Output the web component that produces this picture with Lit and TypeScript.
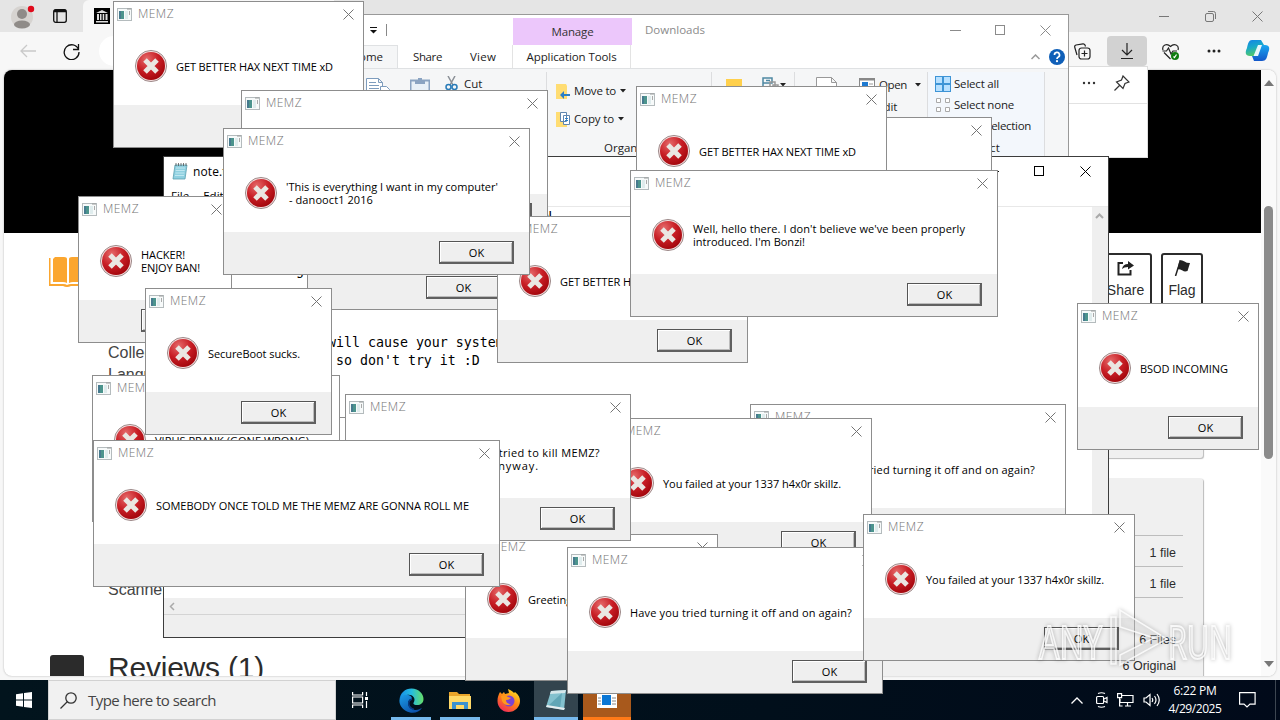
import { LitElement, html, css } from "lit";
import { customElement, property } from "lit/decorators.js";

// Text tracked so that it spans a given number of pixels.
@customElement("fit-text")
class FitText extends LitElement {
  static styles = css`:host { display: inline-block; white-space: pre; }`;
  @property({ type: Number }) w = 0;
  firstUpdated() {
    const n = (this.textContent || "").length;
    const natural = this.getBoundingClientRect().width;
    if (this.w && n) this.style.letterSpacing = `${(this.w - natural) / n}px`;
  }
  render() { return html`<slot></slot>`; }
}

const cross = (s = 11) => html`<svg width=${s} height=${s} viewBox="0 0 11 11" fill="none" stroke="currentColor"><path d="M.5 .5L10.5 10.5M10.5 .5L.5 10.5"/></svg>`;

type Line = [string, number];
interface Box { x: number; y: number; w: number; lines: Line[]; }

@customElement("memz-dialog")
class MemzDialog extends LitElement {
  static styles = css`
    :host { display: block; height: 147px; font: 11px/13px "Open Sans", "Noto Sans", sans-serif; color: #000; }
    .frame { box-sizing: border-box; height: 100%; border: 1px solid #8d8d8d; background: #fff; display: flex; flex-direction: column; overflow: hidden; }
    .bar { height: 24px; display: flex; align-items: center; padding: 0 9px 0 3px; color: #747474; flex: none; }
    .bar .name { margin-left: 6px; flex: 1; font-size: 12px; line-height: 16px; white-space: nowrap; font-weight: 300; }
    .bar svg, .body svg { flex: none; display: block; }
    .body { height: 79px; flex: none; display: flex; align-items: center; padding-left: 20px; }
    .text { margin: 1px 0 0 8px; display: flex; flex-direction: column; align-items: flex-start; }
    .foot { flex: 1; background: #efefef; display: flex; justify-content: flex-end; padding: 9px 15px 0 0; }
    .ok { box-sizing: border-box; width: 75px; height: 23px; border: 1px solid #555; border-right: 2px solid #606060; border-bottom: 2px solid #606060; box-shadow: inset 1px 1px #fff, inset -1px -1px #bbb; text-align: center; line-height: 21px; padding-left: 1px; }
  `;
  @property({ attribute: false }) box!: Box;
  render() {
    return html`<div class="frame">
      <div class="bar">
        <svg width="15" height="13" viewBox="0 0 15 13"><rect x=".5" y=".5" width="14" height="12" fill="#f7fafa" stroke="#b4bbbd"/><rect x="2" y="3" width="5" height="8" fill="#4c948d"/><rect x="2" y="3" width="2" height="8" fill="#467a8e"/><rect x="8" y="3" width="3" height="8" fill="#dfeced"/><rect x="12" y="3" width="1" height="4" fill="#aaa"/><path d="M10 1h4" stroke="#999"/></svg>
        <span class="name"><fit-text w="36">MEMZ</fit-text></span>${cross()}
      </div>
      <div class="body">
        <svg width="34" height="34" viewBox="0 0 34 34"><defs><radialGradient id="g" cx=".35" cy=".25" r=".85"><stop offset="0" stop-color="#e56a6a"/><stop offset=".5" stop-color="#c81e25"/><stop offset="1" stop-color="#9c0208"/></radialGradient></defs><circle cx="17" cy="17" r="15.6" fill="#f1dada" stroke="#8b7777" stroke-width=".8"/><circle cx="17" cy="17" r="14" fill="url(#g)"/><path d="M11 11L23 23M23 11L11 23" stroke="#eae7e2" stroke-width="5"/></svg>
        <div class="text">${this.box.lines.map(([t, w]) => html`<fit-text .w=${w}>${t}</fit-text>`)}</div>
      </div>
      <div class="foot"><div class="ok">OK</div></div>
    </div>`;
  }
}

const HAX: Line[] = [["GET BETTER HAX NEXT TIME xD", 157]];
const SKILLZ: Line[] = [["You failed at your 1337 h4x0r skillz.", 178]];
const AGAIN: Line[] = [["Have you tried turning it off and on again?", 222]];
const boxes: Box[] = [
  { x: 200, y: 417, w: 251, lines: HAX },
  { x: 113, y: 1, w: 251, lines: HAX },
  { x: 241, y: 90, w: 307, lines: [["'This is everything I want in my computer'", 212], [" - danooct1 2016", 87]] },
  { x: 307, y: 163, w: 210, lines: [["SecureBoot sucks.", 92]] },
  { x: 497, y: 216, w: 251, lines: HAX },
  { x: 741, y: 117, w: 251, lines: HAX },
  { x: 636, y: 86, w: 251, lines: HAX },
  { x: 630, y: 170, w: 368, lines: [["Well, hello there. I don't believe we've been properly", 272], ["introduced. I'm Bonzi!", 112]] },
  { x: 78, y: 196, w: 154, lines: [["HACKER!", 44], ["ENJOY BAN!", 59]] },
  { x: 223, y: 128, w: 307, lines: [["'This is everything I want in my computer'", 212], [" - danooct1 2016", 87]] },
  { x: 92, y: 375, w: 248, lines: [["VIRUS PRANK (GONE WRONG)", 154]] },
  { x: 145, y: 288, w: 187, lines: [["SecureBoot sucks.", 92]] },
  { x: 750, y: 404, w: 316, lines: AGAIN },
  { x: 600, y: 418, w: 272, lines: SKILLZ },
  { x: 465, y: 534, w: 253, lines: [["Greetings to all GAiA members!", 160]] },
  { x: 345, y: 394, w: 286, lines: [["I heard that you tried to kill MEMZ?", 192], ["It is still here anyway.", 131]] },
  { x: 93, y: 440, w: 407, lines: [["SOMEBODY ONCE TOLD ME THE MEMZ ARE GONNA ROLL ME", 313]] },
  { x: 1077, y: 303, w: 182, lines: [["BSOD INCOMING", 88]] },
  { x: 567, y: 547, w: 316, lines: AGAIN },
  { x: 863, y: 514, w: 272, lines: SKILLZ },
];

@customElement("edge-browser")
class EdgeBrowser extends LitElement {
  static styles = css`
    :host { display: flex; flex-direction: column; height: 680px; background: #f7f7f7; font-family: "Liberation Sans", Arial, sans-serif; color: #2c2c2c; }
    svg { display: block; flex: none; }
    .tabs { height: 32px; background: #e5e5e5; display: flex; align-items: center; flex: none; }
    .avatar { margin: 0 0 0 11px; }
    .ws { margin: 0 0 0 18px; }
    .tab { margin-left: 16px; width: 240px; height: 32px; background: #f7f7f7; border-radius: 6px 0 0 0; display: flex; align-items: center; padding-left: 11px; }
    .winctl { margin-left: auto; display: flex; gap: 36px; align-items: center; padding-right: 17px; color: #777; }
    .tools { height: 38px; display: flex; align-items: center; flex: none; box-sizing: border-box; }
    .back { margin-left: 20px; } .reload { margin-left: 26px; }
    .addr { margin-left: 19px; height: 30px; width: 900px; border-radius: 15px; background: #fff; }
    .right { flex: 1; display: flex; align-items: center; justify-content: flex-end; }
    .dl { width: 40px; height: 30px; background: #d2d2d2; border-radius: 4px; display: flex; align-items: center; justify-content: center; margin: 0 15px 0 16px; }
    .dots { margin: 0 24px 0 28px; } .cop { margin-right: 10px; }
    .view { margin: 0 4px 4px 4px; height: 606px; box-sizing: border-box; border-radius: 8px; background: #fff; overflow: hidden; display: flex; box-shadow: 0 0 2px #aaa; }
    .page { width: 1257px; overflow: hidden; }
    .hero { height: 163px; background: #000; }
    .below { display: flex; padding-left: 45px; }
    .icons { width: 59px; display: flex; flex-direction: column; padding-top: 24px; box-sizing: border-box; }
    .sq { margin: 368px 0 0 1px; width: 34px; height: 40px; border-radius: 3px; background: #2b2b2b; }
    .meta { width: 600px; padding-top: 109px; font-size: 16px; line-height: 22px; color: #444; }
    .scan { margin-top: 193px; }
    .rev { margin-top: 49px; font-size: 30px; line-height: 36px; color: #2c2c2c; }
    .side { margin-left: auto; width: 340px; margin-right: 58px; padding-top: 20px; }
    .acts { display: flex; justify-content: flex-end; gap: 9px; }
    .act { box-sizing: border-box; border: 2px solid #2c2c2c; border-radius: 3px; height: 60px; display: flex; flex-direction: column; align-items: center; padding-top: 5px; font-size: 14px; gap: 5px; line-height: 18px; }
    .share { width: 53px; } .flag { width: 42px; }
    .card { background: #f0f0f0; border-radius: 3px; box-shadow: 1px 1px 1px #bbb; }
    .card.a { margin-top: 76px; height: 69px; }
    .card.b { margin-top: 20px; height: 220px; font-size: 12.5px; text-align: right; padding: 27px 20px 0; }
    .row { height: 30px; line-height: 34px; border-bottom: 1px solid #bdbdbd; padding-right: 7px; }
    .sum { line-height: 26px; padding: 29px 7px 0 0; }
    .scroll { width: 15px; background: #fafafa; display: flex; flex-direction: column; align-items: center; }
    .thumb { width: 9px; height: 253px; margin: 120px 0 202px; border-radius: 5px; background: #8b8b8b; flex: none; }
    .up { margin-top: 10px; }
  `;
  render() {
    return html`
      <div class="tabs">
        <svg class="avatar" width="24" height="28" viewBox="0 0 24 28"><circle cx="11" cy="15" r="11" fill="#d6d3d0"/><circle cx="11" cy="12" r="5" fill="#8f8b88"/><ellipse cx="11" cy="22.5" rx="8" ry="4" fill="#8f8b88"/><circle cx="20" cy="7" r="3.2" fill="#e00b1c"/></svg>
        <svg class="ws" width="14" height="14" viewBox="0 0 14 14" fill="none" stroke="#111" stroke-width="1.3"><rect x=".7" y=".7" width="12.6" height="12.6" rx="2"/><path d="M1 2h12" stroke-width="2.500"/><path d="M4 3v10"/></svg>
        <div class="tab"><svg width="16" height="16" viewBox="0 0 16 16"><rect width="16" height="16"/><path d="M2 5L8 2l6 3zM2 13h12v1.5H2zM3 6h2v6H3zM6 6h1.5v6H6zM8.7 6h1.5v6H8.700zM11.500 6h2v6h-2z" fill="#ddd"/></svg></div>
        <div class="winctl">
          <svg width="10" height="10" stroke="currentColor"><path d="M0 5.500h10"/></svg>
          <svg width="11" height="11" viewBox="0 0 11 11" fill="none" stroke="currentColor"><rect x=".5" y="2.500" width="8" height="8" rx="1.500"/><path d="M3 .5h5.500a2 2 0 0 1 2 2V8"/></svg>
          ${cross()}
        </div>
      </div>
      <div class="tools">
        <svg class="back" width="17" height="14" viewBox="0 0 17 14" fill="none" stroke="#c9c9c9" stroke-width="1.3"><path d="M16 7H1M7 1L1 7l6 6"/></svg>
        <svg class="reload" width="17" height="17" viewBox="0 0 17 17" fill="none" stroke="#111" stroke-width="1.300"><path d="M15.500 6.500A7.400 7.400 0 1 0 16 9M15.500 1v5.500H10"/></svg>
        <div class="addr"></div>
        <div class="right">
          <svg width="17" height="17" viewBox="0 0 17 17" fill="none" stroke="#222" stroke-width="1.200"><path d="M3 12L.8 4.500A2 2 0 0 1 2 2L9 .8a2 2 0 0 1 2 1.200l.5 1.500"/><rect x="5" y="5" width="11" height="11" rx="2.500"/><path d="M10.500 7.500v6M7.500 10.500h6"/></svg>
          <div class="dl"><svg width="14" height="18" viewBox="0 0 14 18" fill="none" stroke="#222" stroke-width="1.200"><path d="M7 1v12M2 8l5 5 5-5M1 16.500h12"/></svg></div>
          <svg width="17" height="17" viewBox="0 0 17 17" fill="none" stroke="#222" stroke-width="1.200"><path d="M1 7C-.5 2 5 0 8.500 3.500 12 0 17.500 2 16 7M2 9.500l6.500 6.500M.5 8h4l2-3 2.500 6 2-3h4"/><circle cx="13" cy="13" r="4" fill="#107c10" stroke="none"/><path d="M11.500 13.500l1 1 2-3" stroke="#fff"/></svg>
          <svg class="dots" width="14" height="4" fill="#222"><circle cx="2" cy="2" r="1.500"/><circle cx="7" cy="2" r="1.500"/><circle cx="12" cy="2" r="1.500"/></svg>
          <svg class="cop" width="25" height="24" viewBox="0 0 25 24"><defs><linearGradient id="c1" x2=".3" y2="1"><stop stop-color="#1482e8"/><stop offset=".5" stop-color="#19a9c8"/><stop offset="1" stop-color="#52c86a"/></linearGradient><linearGradient id="c2" x2="0" y2="1"><stop stop-color="#1aa7f0"/><stop offset="1" stop-color="#1357c9"/></linearGradient></defs><path d="M7 1h9l3 5h-4l-4 11H5C0 17 0 13 2 9 3 4 4 1 7 1z" fill="url(#c1)"/><path d="M16 6h4c5 0 5 4 3 8-1 5-2 8-6 8H9L7 17h4z" fill="url(#c2)"/><path d="M13 6h4l-4 11H8.500z" fill="#e8f6fb"/></svg>
        </div>
      </div>
      <div class="view">
        <div class="page">
          <div class="hero"></div>
          <div class="below">
            <div class="icons">
              <svg width="36" height="30" viewBox="0 0 36 30"><g fill="#fba62f"><path d="M6 0h9q3 0 3 2v24q-2-1-4-1H4V2zM20 2q0-2 3-2h9l2 2v23H24q-2 0-4 1z"/><path d="M0 1h1.500v26H14q3 0 4 1 2-1 4-1h14v2H22q-2 1-4 1t-4-1H0z"/></g></svg>
              <div class="sq"></div>
            </div>
            <div class="meta">
              <div>Collection</div><div>Language</div>
              <div class="scan">Scanner</div>
              <div class="rev"><fit-text w="156">Reviews (1)</fit-text></div>
            </div>
            <div class="side">
              <div class="acts">
                <div class="act share"><svg width="18" height="16" viewBox="0 0 18 16" fill="none" stroke="#222" stroke-width="2"><path d="M6 3H1.500v11.500h12V10"/><path d="M5 9q1-5 6-5V1l6 4.500L11 9.500V7Q7 7 5 9z" fill="#222" stroke="none"/></svg>Share</div>
                <div class="act flag"><svg width="17" height="16" viewBox="0 0 17 16"><path d="M1.500 16L6 2" stroke="#222" stroke-width="1.500"/><path d="M5.500 0q3 0 5 1.500T16 3l-2.500 8q-3 1-5-.5T3.500 9z" fill="#222"/></svg>Flag</div>
              </div>
              <div class="card a"></div>
              <div class="card b"><div class="row"></div><div class="row">1 file</div><div class="row">1 file</div>
                <div class="sum">6 Files<br />6 Original</div></div>
            </div>
          </div>
        </div>
        <div class="scroll">
          <svg class="up" width="10" height="6"><path d="M0 6L5 0l5 6z" fill="#777"/></svg>
          <div class="thumb"></div>
          <svg width="10" height="6"><path d="M0 0L5 6l5-6z" fill="#777"/></svg>
        </div>
      </div>`;
  }
}

@customElement("file-explorer")
class FileExplorer extends LitElement {
  static styles = css`
    :host { display: flex; flex-direction: column; box-sizing: border-box; height: 160px; border: 1px solid #999; background: #fff; font: 11.5px/16px "Open Sans", "Noto Sans", sans-serif; color: #222; overflow: hidden; }
    svg { display: block; flex: none; }
    .title { height: 30px; display: flex; flex: none; align-items: center; color: #8b8b8b; }
    .caret { margin-left: 128px; }
    .sep { width: 1px; height: 12px; background: #888; margin-left: 8px; }
    .manage { align-self: flex-end; height: 27px; width: 119px; background: #ecc7fb; margin-left: 126px; text-align: center; color: #333; line-height: 27px; }
    .dn { margin-left: 13px; }
    .ctl { margin-left: auto; display: flex; gap: 34px; align-items: center; padding-right: 17px; }
    .tabs { height: 24px; display: flex; flex: none; align-items: center; border-bottom: 1px solid #dfe1e3; box-sizing: border-box; }
    .home { align-self: stretch; width: 157px; box-sizing: border-box; border: 1px solid #dfe1e3; border-bottom: 0; background: #f5f6f7; text-align: right; padding-right: 14px; line-height: 22px; }
    .t1 { margin-left: 15px; } .t2 { margin-left: 28px; }
    .app { margin-left: 16px; width: 117px; text-align: center; border: solid #e3e3e3; border-width: 0 1px; align-self: stretch; line-height: 24px; }
    .help { margin-left: auto; display: flex; gap: 9px; align-items: center; padding-right: 3px; }
    .ribbon { flex: 1; background: #f5f6f7; display: flex; align-items: flex-start; }
    .g { box-sizing: border-box; height: 84px; margin-top: 3px; border-right: 1px solid #dcdddf; display: flex; }
    .clip { width: 306px; padding-left: 125px; }
    .clip svg { margin-top: 6px; }
    .clip .paste { margin-left: 20px; } .clip .cut { margin: 4px 6px 0 15px; }
    .clip span { margin-top: 4px; }
    .org { width: 165px; flex-direction: column; padding: 10px 0 0 9px; gap: 9px; }
    .line { display: flex; align-items: center; gap: 4px; height: 20px; white-space: nowrap; }
    .cap { padding: 3px 0 0 48px; }
    .new { width: 83px; padding: 5px 0 0 14px; gap: 19px; }
    .open { width: 133px; padding: 3px 0 0 21px; gap: 22px; }
    .col { display: flex; flex-direction: column; gap: 2px; }
    .ed { padding-left: 18px; }
    .dd { margin-left: 4px; }
    .sel { width: 117px; padding: 2px 0 0 7px; background: #f3f7fc; flex-direction: column; gap: 2px; }
    .sel .line { gap: 3px; }
    .inv { padding-left: 19px; } .scap { padding: 3px 0 0 33px; }
  `;
  render() {
    const tri = html`<svg width="6" height="4"><path d="M0 0h6L3 3.500z" fill="#222"/></svg>`;
    return html`
      <div class="title">
        <svg class="caret" width="9" height="7"><path d="M1 .5h7" stroke="#111"/><path d="M1 3h7L4.500 6.500z" fill="#111"/></svg><div class="sep"></div>
        <div class="manage"><fit-text w="42">Manage</fit-text></div><fit-text class="dn" w="60">Downloads</fit-text>
        <div class="ctl"><svg width="11" height="11" stroke="currentColor"><path d="M0 5.500h11"/></svg><svg width="11" height="11" fill="none" stroke="currentColor"><rect x=".5" y=".5" width="9" height="9"/></svg>${cross()}</div>
      </div>
      <div class="tabs">
        <div class="home">Home</div><fit-text class="t1" w="29">Share</fit-text><fit-text class="t2" w="26">View</fit-text>
        <div class="app"><fit-text w="90">Application Tools</fit-text></div>
        <div class="help"><svg width="9" height="6" fill="none" stroke="#999" stroke-width="1.500"><path d="M.5 5l4-4 4 4"/></svg>
          <svg width="16" height="16" viewBox="0 0 16 16"><circle cx="8" cy="8" r="8" fill="#0f5fb8"/><path d="M5.500 6a2.500 2.500 0 1 1 3.500 2.200Q8 8.700 8 10" fill="none" stroke="#fff" stroke-width="1.700"/><circle cx="8" cy="12.200" r="1.100" fill="#fff"/></svg></div>
      </div>
      <div class="ribbon">
        <div class="g clip">
          <svg width="24" height="28" viewBox="0 0 24 28" fill="#fff" stroke="#7d9cbd"><path d="M.5 .5h12l4 4v20H.5zM12.500 .5v4h4M3 4.500h7M3 7.500h10M3 10.500h10"/><path d="M14.500 8.500h6l3 3v14h-9z"/></svg>
          <svg class="paste" width="20" height="28" viewBox="0 0 20 28"><rect x=".5" y="2.500" width="19" height="24" fill="#e8f0f8" stroke="#8aa3c2" stroke-width="2"/><path d="M5 2h3V0h4v2h3v4H5z" fill="#8aa3c2"/></svg>
          <svg class="cut" width="13" height="17" viewBox="0 0 13 17" fill="none" stroke="#2a7cb8" stroke-width="1.500"><path d="M3 0l5 9M10 0L5 9" stroke="#8a8f96"/><circle cx="3.500" cy="11" r="2.500"/><circle cx="9.500" cy="11" r="2.500"/></svg>
          <span>Cut</span>
        </div>
        <div class="g org">
          <div class="line"><svg width="14" height="16" viewBox="0 0 14 16"><path d="M0 1h10l1 2v13H0z" fill="#ffdd73"/><path d="M14 11H8V8l-4 4 4 4v-3h6z" fill="#2a7fc7"/></svg><fit-text w="42">Move to</fit-text>${tri}</div>
          <div class="line"><svg width="14" height="16" viewBox="0 0 14 16"><path d="M0 1h10l1 2v13H0z" fill="#ffdd73"/><path d="M4.500 1.500h6v9h-6zM7.500 4.500h6v9h-6z" fill="#fff" stroke="#5f86b0"/><path d="M9 7.500h3M9 9.500h3" stroke="#2a7fc7"/></svg><fit-text w="40">Copy to</fit-text>${tri}</div>
          <span class="cap">Organize</span>
        </div>
        <div class="g new"><svg width="17" height="20"><path d="M0 2h16v18H0z" fill="#ffd04c"/></svg>
          <svg width="24" height="16" viewBox="0 0 24 16" fill="none" stroke="#4d88a3" stroke-width="1.500"><path d="M1 6V1h9v5H1v7h6M4 3.500h4"/><path d="M8 5h5v8H8zM11 8h5v6h-5z" stroke="#999"/><path d="M18 6h6l-3 3.500z" fill="#222" stroke="none"/></svg></div>
        <div class="g open"><svg width="21" height="30" fill="#fff" stroke="#999"><path d="M.5 2.500h15l5 5v22H.5zM15.500 2.500v5h5"/></svg>
          <div class="col"><div class="line"><svg width="16" height="14"><rect x=".5" y=".5" width="15" height="13" fill="#fff" stroke="#888"/><path d="M0 1.500h16" stroke="#888" stroke-width="2"/><rect x="3" y="4" width="6" height="8" fill="#1e7ad1"/><path d="M10 6h4M10 9h4" stroke="#999"/></svg><fit-text w="28">Open</fit-text><span class="dd">${tri}</span></div><div class="line ed">Edit</div></div></div>
        <div class="g sel">
          <div class="line"><svg width="16" height="16"><rect x=".5" y=".5" width="15" height="15" fill="#b7e0ff" stroke="#3d94d6"/><path d="M8 0v16M0 8h16" stroke="#3d94d6" stroke-width="2"/></svg><fit-text w="45">Select all</fit-text></div>
          <div class="line"><svg width="16" height="16" fill="#fff" stroke="#aaa"><path d="M1.500 1.500h4v4h-4zM10.500 1.500h4v4h-4zM1.500 10.500h4v4h-4zM10.500 10.500h4v4h-4z"/></svg><fit-text w="60">Select none</fit-text></div>
          <div class="line inv"><fit-text w="77">Invert selection</fit-text></div>
          <span class="scap">Select</span>
        </div>
      </div>`;
  }
}

@customElement("note-pad")
class NotePad extends LitElement {
  static styles = css`
    :host { display: flex; flex-direction: column; box-sizing: border-box; height: 482px; border: 1px solid #3c3c3c; background: #fff; font: 12px/16px "Open Sans", "Noto Sans", sans-serif; color: #000; overflow: hidden; }
    svg { display: block; flex: none; }
    .title { height: 29px; display: flex; align-items: center; flex: none; padding-left: 8px; gap: 5px; }
    .ctl { margin-left: auto; display: flex; gap: 35px; align-items: center; padding-right: 17px; }
    .menu { height: 20px; border-bottom: 1px solid #e8e8e8; padding-left: 7px; display: flex; gap: 14px; line-height: 20px; font-size: 11.5px; flex: none; }
    .mid { height: 391px; display: flex; flex: none; }
    .text { flex: 1; margin: 0; padding: 1px 0 0 4px; font: 13.29px/18px "DejaVu Sans Mono", monospace; }
    .vs { width: 16px; background: #efefef; padding: 6px 0 0 3px; box-sizing: border-box; }
    .hs { height: 16px; background: #efefef; display: flex; align-items: center; padding-left: 5px; }
    .status { flex: 1; background: #efefef; border-top: 1px solid #d4d4d4; }
  `;
  render() {
    const note = ["YOUR COMPUTER HAS BEEN FUCKED BY THE MEMZ TROJAN.", "", "Your computer won't boot up again,", "so use it as long as you can!", "", ":D", "", "Trying to kill MEMZ will cause your system to be", "destroyed instantly, so don't try it :D"].join("\n");
    return html`
      <div class="title"><svg width="16" height="17" viewBox="0 0 16 17"><path d="M3 2h12l-2 14H1z" fill="#8fd0e0" stroke="#5c9fb0" stroke-width=".8"/><path d="M4 5h9M3.700 7.500h9M3.400 10h9M3 12.500h9" stroke="#cdeef5" stroke-width=".8"/><path d="M4 0v3M6.500 0v3M9 0v3M11.500 0v3M14 0v3" stroke="#555" stroke-width=".8"/></svg><fit-text w="104">note.txt - Notepad</fit-text>
        <div class="ctl"><svg width="11" height="11" stroke="#000"><path d="M0 5.500h11"/></svg><svg width="11" height="11" fill="none" stroke="#000"><rect x=".5" y=".5" width="9" height="9"/></svg>${cross()}</div></div>
      <div class="menu"><span>File</span><span>Edit</span></div>
      <div class="mid"><pre class="text">${note}</pre><div class="vs"><svg width="9" height="6" fill="none" stroke="#aaa" stroke-width="2"><path d="M1 5l3.500-3.500L8 5"/></svg></div></div>
      <div class="hs"><svg width="6" height="9" fill="none" stroke="#aaa" stroke-width="1.500"><path d="M5 1L1.500 4.500 5 8"/></svg></div>
      <div class="status"></div>`;
  }
}

@customElement("task-bar")
class TaskBar extends LitElement {
  static styles = css`
    :host { display: flex; height: 40px; background: linear-gradient(90deg, #02141d, #010f1b 60%, #010a1a); font: 15px/20px "Open Sans", "Noto Sans", sans-serif; color: #fff; }
    svg { display: block; flex: none; }
    .start { width: 48px; display: flex; align-items: center; justify-content: center; }
    .search { width: 288px; box-sizing: border-box; background: #f1f1f1; border: 1px solid #d2d2d2; color: #444; display: flex; align-items: center; padding-left: 11px; gap: 11px; }
    .b { width: 48px; display: flex; align-items: center; justify-content: center; box-sizing: border-box; border-bottom: 3px solid transparent; padding-top: 3px; }
    .tv { margin-right: 7px; }
    .run { width: 40px; border-color: #76b9ed; margin-right: 9px; }
    .ff { width: 40px; margin-right: 5px; }
    .np { width: 44px; background: #33444e; border-color: #76b9ed; margin-right: 5px; }
    .alert { background: #a8591c; border-color: #ff7a18; }
    .tray { margin-left: auto; display: flex; align-items: center; }
    .tray .k { margin-right: 13px; } .tray .n { margin: 0 9px; }
    .clock { font-size: 12px; line-height: 18px; text-align: center; width: 68px; margin-left: 1px; }
    .note { margin: 0 19px 0 10px; }
    .edge { width: 4px; align-self: stretch; border-left: 1px solid #3d4651; }
  `;
  render() {
    return html`
      <div class="start"><svg width="16" height="16" viewBox="0 0 16 16" fill="#fff"><path d="M0 2.200L7 1.200V7.500H0zM8 1L16 0V7.500H8zM0 8.500H7v6.300L0 13.800zM8 8.500h8V16L8 15z"/></svg></div>
      <div class="search"><svg width="17" height="17" fill="none" stroke="#333" stroke-width="1.300"><circle cx="11" cy="6" r="5.200"/><path d="M7.500 9.500L.5 16.500"/></svg><fit-text w="128">Type here to search</fit-text></div>
      <div class="b tv"><svg width="17" height="16" viewBox="0 0 17 16" fill="none" stroke="#fff" stroke-width="1.200"><path d="M.6 0v3h10V0M.6 16v-3h10v3M.6 5h10v6H.6zM14.500 0v4M14.500 9v7"/><path d="M13 5h3v3h-3z" fill="#fff" stroke="none"/></svg></div>
      <div class="b run"><svg width="25" height="25" viewBox="0 0 25 25"><defs><linearGradient id="e1"><stop stop-color="#168ee8"/><stop offset=".5" stop-color="#25bce0"/><stop offset="1" stop-color="#66df68"/></linearGradient><linearGradient id="e2" x2=".7" y2="1"><stop stop-color="#1b9de8"/><stop offset="1" stop-color="#0c4fa8"/></linearGradient></defs><path d="M.5 12C1 5 6 .5 12.500 .5 20 .5 24.500 6 24.500 11c0 4-3 6-6.500 6-4 0-4-2-3-3 2-4-2-8-7-7C4 7.500 1 9.500 .5 12z" fill="url(#e1)"/><path d="M.5 12C1 9 4 6.500 8 6.800c3 .2 5 2 5 4-5 0-6 9 2 11 3 .8 6-.5 8-2C20 25.500 12 26 7 23 2.500 20.500 0 16 .5 12z" fill="url(#e2)"/><path d="M13 11c-5 2-4 9 2 10.500" fill="none" stroke="#083b87" stroke-width="1.500"/></svg></div>
      <div class="b run"><svg width="22" height="19" viewBox="0 0 22 19"><path d="M0 1h8l2 2h11v15H0z" fill="#e9a52b"/><path d="M0 5h22v13H0z" fill="#ffd968"/><path d="M3 18v-7h16v7h-4v-4H7v4z" fill="#3b91d0"/></svg></div>
      <div class="b ff"><svg width="24" height="24" viewBox="0 0 24 24"><defs><linearGradient id="f" x1=".8" x2=".2" y2="1"><stop stop-color="#ffe226"/><stop offset=".5" stop-color="#ff8216"/><stop offset="1" stop-color="#f0245e"/></linearGradient></defs><path d="M3 4l2 2 2-2 1 2 4-1-1-4c3 1 5 3 6 4l1-1c4 3 5 6 5 9 0 6-5 11-11.500 11S.5 19 .5 13c0-4 1-6 2.500-9z" fill="url(#f)"/><circle cx="12" cy="13" r="5.500" fill="#7a43d4"/><path d="M4 8q4-2 7 1l3 1q-2 2-5 2 0 4 5 4-6 3-9-3z" fill="#ff9a1c"/></svg></div>
      <div class="b np"><svg width="22" height="23" viewBox="0 0 22 23"><path d="M6 2l15-1-2 20-18-3z" fill="#83c1ce"/><path d="M6 2l15-1-1 3-15 1z" fill="#d6e7ea"/><path d="M3 17L17 4l-2 16z" fill="#4b94a6" opacity=".6"/><path d="M1 18l18 3 1-2-18-3z" fill="#e6eef0"/></svg></div>
      <div class="b alert"><svg width="20" height="17" viewBox="0 0 20 17"><path d="M0 0h20v16H0z" fill="#fff"/><path d="M5 3h9v10H5z" fill="#0b77d5"/><path d="M1 6h3M1 9h3M1 12h3M15 6h4M15 9h4M15 12h4" stroke="#888"/></svg></div>
      <div class="tray">
        <svg class="k" width="12" height="7" fill="none" stroke="#fff" stroke-width="1.300"><path d="M.5 6.500L6 1l5.500 5.500"/></svg>
        <svg width="12" height="16" viewBox="0 0 12 16" fill="none" stroke="#fff" stroke-width="1.200"><rect x=".6" y="4.500" width="7" height="7" rx="1"/><path d="M8 7l3-1.500v5L8 9M2 1.500q3.500-1.500 7 0M2 14.500q3.500 1.500 7 0"/></svg>
        <svg class="n" width="17" height="14" viewBox="0 0 17 14" fill="none" stroke="#fff" stroke-width="1.200"><path d="M5 2.500h11v7H3V6M8 13h6M10.500 10v3M.6 .6h4v4h-4zM2.600 5v8h3"/></svg>
        <svg width="17" height="14" viewBox="0 0 17 14" fill="none" stroke="#fff" stroke-width="1.200"><path d="M1 5h2l4-3.500v11L3 9H1zM9 5q1.500 2 0 4M11.500 3q3 4 0 8M14 1q4.500 6 0 12"/></svg>
        <div class="clock"><fit-text w="43">6:22 PM</fit-text><br /><fit-text w="53">4/29/2025</fit-text></div>
        <svg class="note" width="17" height="16" fill="none" stroke="#fff" stroke-width="1.200"><path d="M.6 .6h15.500v11.500H11L8 15l-3-2.900H.6z"/></svg>
        <div class="edge"></div>
      </div>`;
  }
}

@customElement("app-root")
class AppRoot extends LitElement {
  static styles = css`
    :host { display: block; width: 1280px; height: 720px; position: relative; overflow: hidden; }
    .desk { display: flex; flex-direction: column; }
    .win { position: absolute; }
    .flyout { left: 800px; top: 66px; width: 348px; height: 92px; box-sizing: border-box; background: #fff; border: 1px solid #ddd; }
    .head { height: 37px; border-bottom: 1px solid #e2e2e2; display: flex; align-items: center; justify-content: flex-end; gap: 18px; padding: 0 17px 5px 0; box-sizing: border-box; }
    .exp { left: 240px; top: 14px; width: 829px; }
    .pad { left: 163px; top: 156px; width: 946px; }
    .mark { left: 1034px; top: 604px; filter: drop-shadow(0 0 2px rgba(0,0,0,.35)); }
    .mark text { font: 400 46px "Open Sans", sans-serif; stroke-width: 2px; }
  `;
  render() {
    return html`
      <div class="desk"><edge-browser></edge-browser><task-bar></task-bar></div>
      <div class="win flyout"><div class="head">
        <svg width="14" height="4" fill="#333"><circle cx="2" cy="2" r="1.200"/><circle cx="7" cy="2" r="1.200"/><circle cx="12" cy="2" r="1.200"/></svg>
        <svg width="16" height="16" viewBox="0 0 16 16" fill="none" stroke="#333" stroke-width="1.200"><path d="M9 1l6 6-4 1.500-2 5L2.500 7 7.500 5zM5.500 10.500L.5 15.500"/></svg></div></div>
      <file-explorer class="win exp"></file-explorer>
      <note-pad class="win pad"></note-pad>
      ${boxes.map((b) => html`<memz-dialog class="win" style="left:${b.x}px;top:${b.y}px;width:${b.w}px" .box=${b}></memz-dialog>`)}
      <svg class="win mark" width="204" height="70" viewBox="0 0 204 70" fill="#fff" fill-opacity=".3" stroke="#fff" stroke-opacity=".8" stroke-width="1.500">
        <text x="5" y="55" textLength="63" lengthAdjust="spacingAndGlyphs">ANY</text>
        <text x="134" y="55" textLength="64" lengthAdjust="spacingAndGlyphs">RUN</text>
        <path d="M86 6v17l34 11-34 17v10l47-26zM77 13h5v47h-5z"/>
      </svg>`;
  }
}
